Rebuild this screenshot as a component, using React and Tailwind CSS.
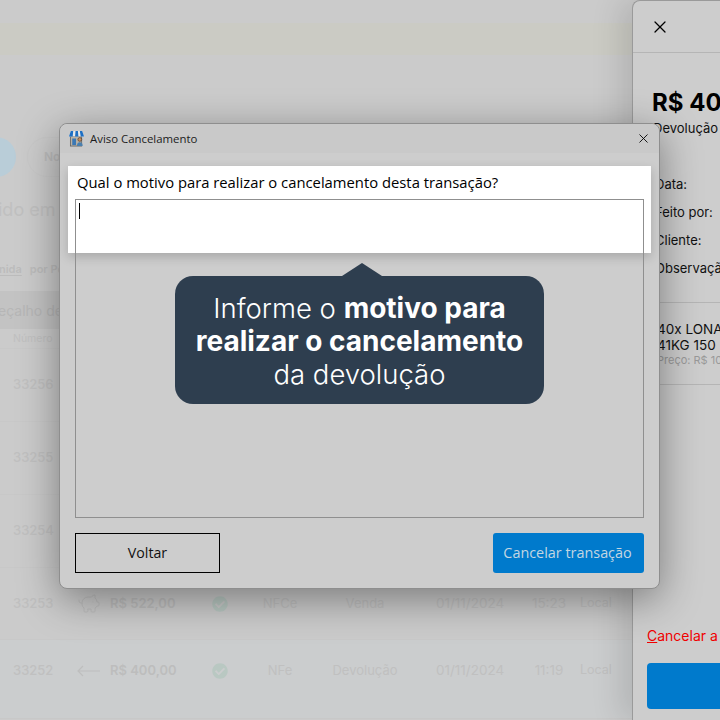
import React from 'react';
import { X, PiggyBank } from 'lucide-react';
import { FaCheckCircle } from 'react-icons/fa';

const rows = [
  { id: '33256', h: 'h-[73px]' },
  { id: '33255', h: 'h-[73px]' },
  { id: '33254', h: 'h-[73px]' },
  { id: '33253', h: 'h-[72px]', total: 'R$ 522,00', icon: 'piggy', doc: 'NFCe', type: 'Venda', time: '15:23' },
  { id: '33252', h: 'h-[79px] pb-[17px] bg-[#cbcdce]', total: 'R$ 400,00', icon: 'arrow', doc: 'NFe', type: 'Devolução', time: '11:19' },
];

function StoreIcon() {
  return (
    <svg width="17" height="17" viewBox="0 0 18 18" className="shrink-0">
      <rect x="2.5" y="7" width="12" height="10" fill="#b9b2a6" stroke="#5a5a5a" strokeWidth="0.8" />
      <path d="M3 1h12l2 6H1z" fill="#e8e8e8" />
      <path d="M3 1h2.5L5 7H1zM8 1h2.5l.5 6H7.5zM12.5 1H15l2 6h-3.5z" fill="#1d6fc4" />
      <rect x="4.5" y="9" width="4" height="7" fill="#3b78b5" />
      <circle cx="12.5" cy="10" r="2" fill="#c98f5e" stroke="#3c2c20" strokeWidth="0.6" />
      <path d="M9.5 17c0-3 1.2-4 3-4s3 1 3 4z" fill="#4a7fae" />
    </svg>
  );
}

function TableRow({ row }) {
  return (
    <div className={`flex items-center border-b border-[#c8c8c8] text-[13px] text-[#c0c0c0] ${row.h}`}>
      <span className="ml-[13px] w-[64px] font-medium">{row.id}</span>
      {row.total && (
        <>
          <span className="flex w-[33px] items-center">
            {row.icon === 'piggy' ? (
              <PiggyBank size={24} strokeWidth={1} className="text-[#bebebe]" />
            ) : (
              <svg width="24" height="12" viewBox="0 0 24 12" fill="none" stroke="#bebebe" strokeWidth="1.2">
                <path d="M23 6H1M6 1L1 6l5 5" />
              </svg>
            )}
          </span>
          <span className="w-[102px] font-semibold text-[#bdbdbd]">{row.total}</span>
          <FaCheckCircle size={16} className="text-[#b9c8c2]" />
          <span className="w-[104px] text-center">{row.doc}</span>
          <span className="w-[66px] text-center">{row.type}</span>
          <span className="ml-[38px] w-[67px] text-center text-[13.5px]">01/11/2024</span>
          <span className="ml-[26px] w-[40px] text-center text-[13.5px]">{row.time}</span>
          <span className="ml-[11px] text-[12.5px]">Local</span>
        </>
      )}
    </div>
  );
}

function BackgroundPage() {
  return (
    <main className="w-[632px] shrink-0 overflow-hidden font-['Inter',sans-serif]">
      <div className="mt-[23px] h-[32px] bg-[#cbcbc4]" />
      <div className="mt-[82px] flex h-[40px] items-center">
        <div className="ml-[-24px] size-[40px] shrink-0 rounded-full bg-[#b9cdd8]" />
        <div className="ml-[11px] rounded-full border border-[#c8c8c8] py-[10px] pr-[16px] pl-[16px] text-[12px] font-semibold text-[#bcbcbc]">
          Novo
        </div>
      </div>
      <p className="mt-[22px] ml-[-2px] h-[22px] text-[18px] leading-[22px] text-[#c0c0c0]">ido em Aberto</p>
      <div className="mt-[40px] ml-[-1px] flex h-[20px] gap-[8px] text-[11px] font-semibold text-[#bcbcbc]">
        <span className="underline underline-offset-2">nida</span>
        <span>por Período</span>
      </div>
      <div className="mt-[10px] flex h-[38px] items-center bg-[#c3c3c3] text-[14px] text-[#b6b6b6]">
        <span className="ml-[-2px]">eçalho de</span>
      </div>
      <div className="flex h-[20px] items-center border-b border-[#c8c8c8] pl-[13px] text-[10.5px] text-[#c0c0c0]">Número</div>
      {rows.map(row => (
        <TableRow key={row.id} row={row} />
      ))}
    </main>
  );
}

function SidePanel() {
  return (
    <aside className="flex h-full flex-1 flex-col rounded-tl-[8px] border-l border-t border-[#9a9a9a] bg-[#cdcdcd] font-['Inter',sans-serif] whitespace-nowrap shadow-[-12px_0_30px_rgba(0,0,0,0.12)]">
      <div className="flex h-[52px] items-center border-b border-[#b5b5b5] pl-[17px]">
        <X size={20} strokeWidth={1.5} className="text-black" />
      </div>
      <p className="mt-[35px] ml-[19px] h-[30px] text-[24px] leading-[30px] font-bold text-black">R$ 400,00</p>
      <p className="mt-[1px] ml-[20px] h-[18px] text-[13px] leading-[18px] text-[#111]">Devolução</p>
      <div className="mt-[38px] ml-[22px] flex flex-col gap-[10px] text-[13px] leading-[18px] text-[#111]">
        <span>Data:</span>
        <span>Feito por:</span>
        <span>Cliente:</span>
        <span>Observação:</span>
      </div>
      <div className="mt-[25px] h-[83px] border-y border-[#b5b5b5] pt-[18px] pl-[24px]">
        <p className="text-[13.5px] leading-[16px] text-[#111]">40x LONA</p>
        <p className="text-[13.5px] leading-[16px] text-[#111]">41KG 150</p>
        <p className="text-[11px] leading-[14px] text-[#999]">Preço: R$ 10,00</p>
      </div>
      <p className="mt-[242px] ml-[14px] h-[18px] text-[14px] leading-[18px] text-[#f00000]">
        <span className="underline">C</span>ancelar a devolução
      </p>
      <div className="mt-[18px] ml-[14px] h-[46px] w-[100px] rounded-[4px] bg-[#007acc]" />
    </aside>
  );
}

function CancelDialog() {
  return (
    <section className="absolute top-[123px] left-[59px] flex h-[466px] w-[601px] flex-col rounded-[8px] border border-[#8e8e8e] bg-[#cdcdcd] font-['Open_Sans',sans-serif] shadow-[0_10px_40px_rgba(0,0,0,0.4)]">
      <header className="flex h-[29px] items-center rounded-t-[8px] bg-[#c9c9c9] pl-[8px]">
        <StoreIcon />
        <span className="ml-[5px] text-[11.4px] text-[#1c1c1c]">Aviso Cancelamento</span>
        <X size={15} strokeWidth={1.4} className="mr-[8px] ml-auto text-black" />
      </header>
      <div className="absolute top-[42px] left-[8px] h-[87px] w-[583px] bg-white shadow-[0_4px_10px_rgba(0,0,0,0.18)]" />
      <div className="relative flex flex-1 flex-col px-[15px] pb-[15px]">
        <p className="mt-[17px] h-[29px] pl-[2px] text-[14.8px] leading-[25px] text-black">
          Qual o motivo para realizar o cancelamento desta transação?
        </p>
        <div className="h-[319px] border border-[#8f8f8f] pt-[3px] pl-[3px]">
          <div className="h-[16px] w-px bg-black" />
        </div>
        <div className="mt-auto flex items-center justify-between">
          <button className="h-[40px] w-[145px] border border-black text-[14.2px] text-[#111]">Voltar</button>
          <button className="h-[40px] w-[151px] rounded-[3px] bg-[#007acc] pr-[2px] text-[14.4px] text-[#c4d6e2]">Cancelar transação</button>
        </div>
      </div>
    </section>
  );
}

function HintBubble() {
  return (
    <div className="absolute top-[263px] left-[175px] w-[369px] font-['Inter',sans-serif]">
      <svg width="40" height="13" viewBox="0 0 40 13" className="mx-auto block translate-x-[2px] fill-[#2e3e4f]">
        <path d="M0 13L20 0l20 13z" />
      </svg>
      <div className="flex h-[128px] items-center justify-center rounded-[18px] bg-[#2e3e4f] pt-[2px] text-center text-[28px] leading-[33px] text-white">
        <p>
          <span className="text-[27.5px] font-light">Informe o </span>
          <b className="font-bold">motivo para</b>
          <br />
          <b className="font-bold">realizar o cancelamento</b>
          <br />
          <span className="text-[27.5px] font-light">da devolução</span>
        </p>
      </div>
    </div>
  );
}

export default function App() {
  return (
    <div className="relative flex h-[720px] w-[720px] overflow-hidden bg-[#cbcbcb]">
      <BackgroundPage />
      <SidePanel />
      <CancelDialog />
      <HintBubble />
    </div>
  );
}
